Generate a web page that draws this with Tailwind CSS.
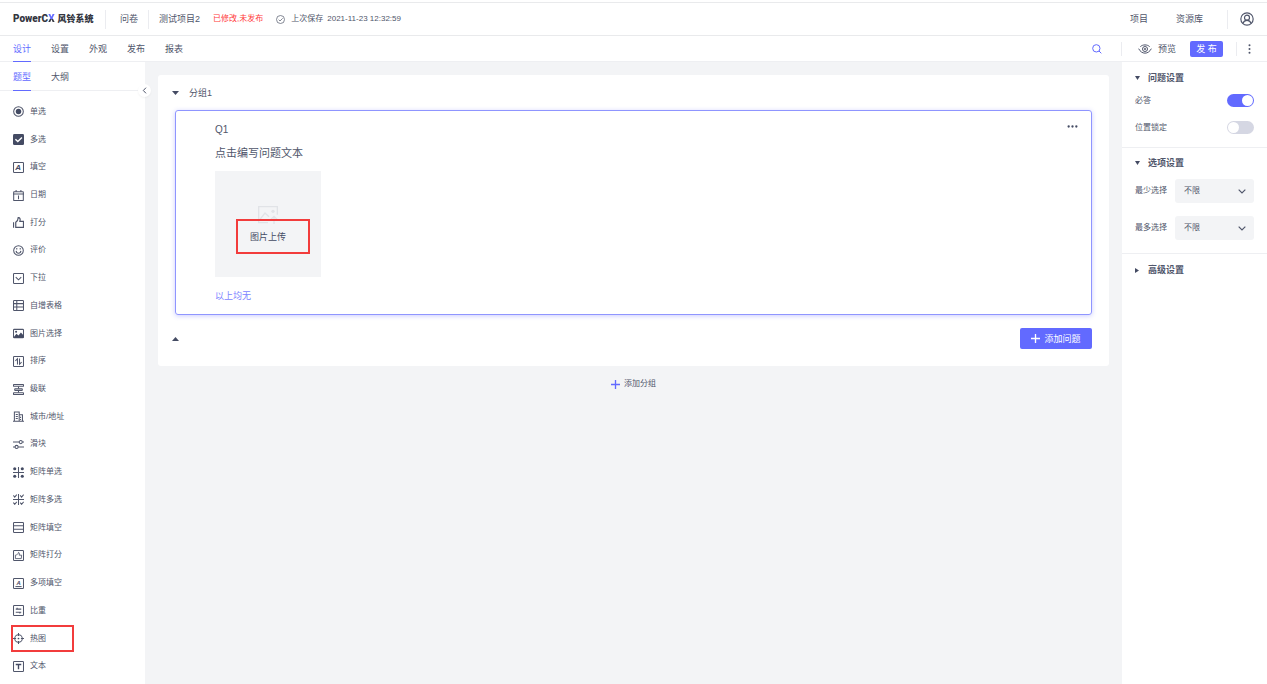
<!DOCTYPE html>
<html lang="zh-CN">
    <head>
      <title>PowerCX 风铃系统</title>
      <meta charset="UTF-8">
      <meta name="viewport" content="width=device-width, initial-scale=1.0">
      <script src="https://cdn.jsdelivr.net/npm/@tailwindcss/browser@4"></script>
    </head>
    <body class="flex h-screen min-h-[640px] flex-col overflow-hidden whitespace-nowrap bg-white pt-[2px] font-['Liberation_Sans','Noto_Sans_CJK_SC',sans-serif] text-[9px] leading-4 text-[#50566b]">

      <!-- Top bar -->
      <header class="flex h-[34px] shrink-0 items-center border-y border-[#e9eaec] px-[13px]">
        <a href="#" class="flex w-[80px] items-center gap-[3px] font-black text-[#34363f]">
          <span class="font-['Roboto'] text-[10px]">PowerC<span class="bg-linear-to-b from-[#626aff] from-50% to-[#34363f] to-60% bg-clip-text text-transparent">X</span></span>
          <span>风铃系统</span>
        </a>
        <span class="ml-3 h-[19px] w-px bg-[#ebecf0]"></span>
        <a href="#" class="ml-[14px]">问卷</a>
        <span class="ml-[10px] h-[19px] w-px bg-[#ebecf0]"></span>
        <span class="ml-[10px]">测试项目2</span>
        <span class="ml-[13px] text-[8px] text-[#ff3b3b]">已修改,未发布</span>
        <svg class="ml-[13px] size-[9px]" viewBox="0 0 27 27" fill="none" stroke="#6b7080" stroke-width="2.5"><circle cx="13.500" cy="13.500" r="12"/><path d="M8 14l4 4 8-8"/></svg>
        <span class="ml-[6px] text-[8px]">上次保存</span>
        <span class="ml-1 text-[8px]">2021-11-23 12:32:59</span>
        <nav class="ml-auto flex items-center">
          <a href="#">项目</a>
          <a href="#" class="ml-7">资源库</a>
          <span class="ml-6 h-[19px] w-px bg-[#ebecf0]"></span>
          <button class="ml-3" aria-label="账号">
            <svg class="size-[14px]" viewBox="0 0 42 42" fill="none" stroke="#50566b" stroke-width="3.500"><circle cx="21" cy="21" r="18.500"/><circle cx="21" cy="17" r="7.500"/><path d="M9 34c2-7 6-9 12-9s10 2 12 9"/></svg>
          </button>
        </nav>
      </header>

      <!-- Tabs and page actions -->
      <div class="flex h-[26px] shrink-0 items-center border-b border-[#eeeff2] pl-[13px]">
        <nav class="flex h-[26px] gap-5 leading-[27px]">
          <a href="#" class="border-b border-[#626aff] text-[#626aff]">设计</a>
          <a href="#">设置</a>
          <a href="#">外观</a>
          <a href="#">发布</a>
          <a href="#">报表</a>
        </nav>
        <button class="ml-auto" aria-label="搜索">
          <svg class="size-[10px]" viewBox="0 0 30 30" fill="none" stroke="#626aff" stroke-width="3"><circle cx="13" cy="13" r="11"/><path d="M21 21l7 7"/></svg>
        </button>
        <div class="ml-[19px] flex w-[146px] items-center">
          <span class="h-[14px] w-px bg-[#ebecf0]"></span>
          <a href="#" class="ml-4 flex items-center gap-[6px]">
            <svg class="h-[10px] w-[14px]" viewBox="0 0 42 30" fill="none" stroke="#50566b" stroke-width="3"><path d="M7 8C14 1 28 1 35 8M2 14c9 18 29 18 38 0"/><circle cx="21" cy="15" r="7.500"/><circle cx="21" cy="15" r="2"/></svg>
            <span>预览</span>
          </a>
          <button class="ml-[14px] h-4 w-[33px] rounded-[2px] bg-[#626aff] text-white">发 布</button>
          <span class="ml-[13px] h-[14px] w-px bg-[#ebecf0]"></span>
          <button class="ml-[11px]" aria-label="更多">
            <svg class="h-[10px] w-[3px]" viewBox="0 0 9 30" fill="#50566b"><circle cx="4.500" cy="4" r="3"/><circle cx="4.500" cy="15" r="3"/><circle cx="4.500" cy="26" r="3"/></svg>
          </button>
        </div>
      </div>

      <div class="flex min-h-0 flex-1">
        <!-- Question types -->
        <aside class="relative flex w-[145px] shrink-0 flex-col">
          <nav class="flex h-[29px] shrink-0 gap-5 border-b border-[#eeeff2] pl-[13px] leading-[30px]">
            <a href="#" class="h-[29px] border-b border-[#626aff] text-[#626aff]">题型</a>
            <a href="#">大纲</a>
          </nav>
          <button class="absolute top-[22px] -right-[6px] z-10 flex size-[13px] items-center justify-center rounded-full bg-white shadow-xs" aria-label="收起">
            <svg class="h-[7px] w-[5px]" viewBox="0 0 15 21" fill="none" stroke="#50566b" stroke-width="3"><path d="M12 2L4 10.500l8 8.500"/></svg>
          </button>
          <ul class="flex flex-1 flex-col pt-[7px] pb-1 pl-[13px] text-[8px] *:flex *:flex-1 *:items-center">
            <li><a href="#" class="flex items-center gap-[6px]">
              <svg class="size-[11px]" viewBox="0 0 32 32" fill="none" stroke="#50566b" stroke-width="3"><circle cx="16" cy="16" r="14"/><circle cx="16" cy="16" r="8" fill="#444b63" stroke="none"/></svg>单选</a></li>
            <li><a href="#" class="flex items-center gap-[6px]">
              <svg class="size-[11px]" viewBox="0 0 32 32" fill="none"><rect width="32" height="32" rx="4" fill="#444b63"/><path d="M7 15l7 7 12-12" stroke="#fff" stroke-width="4"/></svg>多选</a></li>
            <li><a href="#" class="flex items-center gap-[6px]">
              <svg class="size-[11px]" viewBox="0 0 32 32" fill="none"><rect x="1.500" y="1.500" width="29" height="29" rx="2" stroke="#50566b" stroke-width="3"/><text x="15" y="24" text-anchor="middle" font-size="23" font-weight="bold" font-style="italic" fill="#444b63">A</text></svg>填空</a></li>
            <li><a href="#" class="flex items-center gap-[6px]">
              <svg class="size-[11px]" viewBox="0 0 32 32" fill="none" stroke="#50566b" stroke-width="3"><rect x="2" y="5" width="28" height="25.500" rx="1"/><path d="M0 11.500h32M9 0v6M23 0v6M16 16v11"/></svg>日期</a></li>
            <li><a href="#" class="flex items-center gap-[6px]">
              <svg class="size-[11px]" viewBox="0 0 32 32" fill="none" stroke="#50566b" stroke-width="3.500"><path d="M1.500 15v16M8 30V15c5-3 7-7 7-13 5-1 7 3 5 11h10.500v17H8z"/></svg>打分</a></li>
            <li><a href="#" class="flex items-center gap-[6px]">
              <svg class="size-[11px]" viewBox="0 0 32 32" fill="none" stroke="#50566b" stroke-width="3"><circle cx="16" cy="16" r="14"/><path d="M9 17c1 9 13 9 14 0M11 9v4M21 9v4"/></svg>评价</a></li>
            <li><a href="#" class="flex items-center gap-[6px]">
              <svg class="size-[11px]" viewBox="0 0 32 32" fill="none" stroke="#50566b" stroke-width="3"><rect x="1.500" y="1.500" width="29" height="29" rx="2"/><path d="M8 12l8 8 8-8"/></svg>下拉</a></li>
            <li><a href="#" class="flex items-center gap-[6px]">
              <svg class="size-[11px]" viewBox="0 0 32 32" fill="none" stroke="#50566b" stroke-width="3"><rect x="1.500" y="1.500" width="29" height="29" rx="2"/><path d="M2 10.500h28M2 20.500h28M11 2v28"/></svg>自增表格</a></li>
            <li><a href="#" class="flex items-center gap-[6px]">
              <svg class="size-[11px]" viewBox="0 0 32 32" fill="none"><rect x="1.500" y="4" width="29" height="24" rx="2" stroke="#50566b" stroke-width="3"/><path d="M2 27l8-10 6 5 7-9 8 9v6H2z" fill="#444b63"/><circle cx="9" cy="11" r="3" fill="#444b63"/></svg>图片选择</a></li>
            <li><a href="#" class="flex items-center gap-[6px]">
              <svg class="size-[11px]" viewBox="0 0 32 32" fill="none" stroke="#50566b" stroke-width="3"><rect x="1.500" y="1.500" width="29" height="29" rx="2"/><path d="M7 14l6-6v17M19 7v17l6-6"/></svg>排序</a></li>
            <li><a href="#" class="flex items-center gap-[6px]">
              <svg class="size-[11px]" viewBox="0 0 32 32" fill="none" stroke="#50566b" stroke-width="3"><rect x="1.500" y="1.500" width="29" height="5" rx="1"/><rect x="5" y="13.500" width="22" height="5" rx="1"/><rect x="1.500" y="25.500" width="29" height="5" rx="1"/><path d="M16 7v6M16 19v6"/></svg>级联</a></li>
            <li><a href="#" class="flex items-center gap-[6px]">
              <svg class="size-[11px]" viewBox="0 0 32 32" fill="none" stroke="#50566b" stroke-width="3"><path d="M0 29.500h32M4 29V3h14v26M18 11h9.500v18M8 10h6M8 16h6M8 22h6M22 17v3M22 23v3"/></svg>城市/地址</a></li>
            <li><a href="#" class="flex items-center gap-[6px]">
              <svg class="size-[11px]" viewBox="0 0 32 32" fill="none" stroke="#50566b" stroke-width="3"><path d="M0 9h18M27 9h5M0 23h6M15 23h17"/><circle cx="22.500" cy="9" r="4.500"/><circle cx="10.500" cy="23" r="4.500"/></svg>滑块</a></li>
            <li><a href="#" class="flex items-center gap-[6px]">
              <svg class="size-[11px]" viewBox="0 0 32 32" fill="#444b63"><path d="M16 0v32M0 16h32" stroke="#50566b" stroke-width="3"/><circle cx="5" cy="5" r="4.500"/><circle cx="27" cy="5" r="4.500"/><circle cx="5" cy="27" r="4.500"/><circle cx="27" cy="27" r="4.500"/></svg>矩阵单选</a></li>
            <li><a href="#" class="flex items-center gap-[6px]">
              <svg class="size-[11px]" viewBox="0 0 32 32" fill="none" stroke="#50566b" stroke-width="3"><path d="M16 0v32M0 16h32M1 4l4 5 6-7M21 4l4 5 6-7M1 25l4 5 6-7M21 25l4 5 6-7"/></svg>矩阵多选</a></li>
            <li><a href="#" class="flex items-center gap-[6px]">
              <svg class="size-[11px]" viewBox="0 0 32 32" fill="none" stroke="#50566b" stroke-width="3"><rect x="1.500" y="1.500" width="29" height="29" rx="2"/><path d="M2 11h28M2 21h28"/></svg>矩阵填空</a></li>
            <li><a href="#" class="flex items-center gap-[6px]">
              <svg class="size-[11px]" viewBox="0 0 32 32" fill="none" stroke="#50566b" stroke-width="3"><rect x="1.500" y="1.500" width="29" height="29" rx="2"/><path d="M7 15v10h17l1-10h-7c1-5 1-7-2-8-1 5-4 7-9 8z" stroke-width="2.500"/></svg>矩阵打分</a></li>
            <li><a href="#" class="flex items-center gap-[6px]">
              <svg class="size-[11px]" viewBox="0 0 32 32" fill="none"><rect x="1.500" y="1.500" width="29" height="29" rx="2" stroke="#50566b" stroke-width="3"/><path d="M7 25h18" stroke="#50566b" stroke-width="3"/><text x="16" y="20" text-anchor="middle" font-size="17" font-weight="bold" font-style="italic" fill="#444b63">A</text></svg>多项填空</a></li>
            <li><a href="#" class="flex items-center gap-[6px]">
              <svg class="size-[11px]" viewBox="0 0 32 32" fill="none" stroke="#50566b" stroke-width="3"><rect x="1.500" y="1.500" width="29" height="29" rx="2"/><path d="M8 12h16M8 21h16M12 8v4M20 21v4"/></svg>比重</a></li>
            <li class="relative"><a href="#" class="flex items-center gap-[6px]">
              <svg class="size-[11px]" viewBox="0 0 32 32" fill="none" stroke="#50566b" stroke-width="3"><circle cx="16" cy="16" r="11"/><path d="M16 0v9M16 23v9M0 16h9M23 16h9"/><circle cx="16" cy="16" r="2.500" fill="#444b63" stroke="none"/></svg>热图</a>
              <span class="absolute inset-y-0 -left-[2px] w-[63px] border-2 border-[#f23c3c]"></span></li>
            <li><a href="#" class="flex items-center gap-[6px]">
              <svg class="size-[11px]" viewBox="0 0 32 32" fill="none"><rect x="1.500" y="1.500" width="29" height="29" rx="2" stroke="#50566b" stroke-width="3"/><path d="M8 10h16M16 10v14" stroke="#444b63" stroke-width="4"/></svg>文本</a></li>
          </ul>
        </aside>

        <!-- Survey canvas -->
        <main class="min-w-0 flex-1 bg-[#f3f4f6] p-[13px]">
          <section class="rounded-[3px] bg-white px-[17px]">
            <div class="flex h-[35px] items-center">
              <button aria-label="折叠分组" class="w-[14px]"><svg class="-ml-[3px] h-[4px] w-[7px]" viewBox="0 0 7 4" fill="#444b63"><path d="M0 0h7L3.500 4z"/></svg></button>
              <span>分组1</span>
            </div>
            <div class="relative rounded-[3px] border border-[#8f95ff] px-[39px] pt-[11px] pb-[10px] shadow-[0_1px_5px_#626aff55]">
              <button aria-label="更多操作" class="absolute top-[14px] right-[13px]"><svg class="h-[3px] w-[11px]" viewBox="0 0 33 9" fill="#444b63"><circle cx="5" cy="4.500" r="3.500"/><circle cx="16.500" cy="4.500" r="3.500"/><circle cx="28" cy="4.500" r="3.500"/></svg></button>
              <div class="text-[10px]">Q1</div>
              <h2 class="mt-[5px] text-[11px] leading-5">点击编写问题文本</h2>
              <button class="relative mt-2 flex size-[106px] flex-col items-center bg-[#f3f4f6] pt-[35px] text-[#444b63]">
                <svg class="h-[18px] w-5" viewBox="0 0 60 54" fill="none" stroke="#e1e3e7" stroke-width="4"><path d="M58 26V2H2v48h28M6 40l15-19 12 11M48 54V32M39 40l9-9 9 9"/><circle cx="45" cy="16" r="5" fill="#e1e3e7" stroke="none"/></svg>
                <span class="mt-[5px]">图片上传</span>
                <span class="absolute top-[48px] left-[21px] h-[35px] w-[74px] border-2 border-[#f23c3c]"></span>
              </button>
              <a href="#" class="mt-[11px] block w-fit text-[#7c83ff]">以上均无</a>
            </div>
            <div class="flex items-center justify-between pt-[13px] pb-[17px]">
              <button aria-label="收起"><svg class="-ml-[3px] h-[4px] w-[7px]" viewBox="0 0 7 4" fill="#444b63"><path d="M0 4h7L3.500 0z"/></svg></button>
              <button class="flex h-[21px] w-[72px] items-center justify-center gap-1 rounded-[2px] bg-[#626aff] text-white">
                <svg class="size-[9px]" viewBox="0 0 27 27" stroke="currentColor" stroke-width="4"><path d="M13.500 0v27M0 13.500h27"/></svg>添加问题</button>
            </div>
          </section>
          <button class="mx-auto mt-[10px] flex items-center gap-1 text-[8px]">
            <svg class="size-[9px]" viewBox="0 0 27 27" stroke="#626aff" stroke-width="4"><path d="M13.500 0v27M0 13.500h27"/></svg>添加分组</button>
        </main>

        <!-- Settings -->
        <aside class="w-[145px] shrink-0 text-[8px]">
          <section class="border-b border-[#eeeff2] pt-2 pr-[13px] pb-[13px] pl-[13px]">
            <h3 class="flex items-center text-[9px] font-bold"><svg class="mr-2 h-[4px] w-[5px]" viewBox="0 0 5 4" fill="#444b63"><path d="M0 0h5L2.500 4z"/></svg>问题设置</h3>
            <div class="mt-2 flex h-[13px] items-center justify-between">
              <label for="required">必答</label>
              <input id="required" type="checkbox" checked class="h-[13px] w-[27px] appearance-none rounded-full bg-[#d5d7e3] p-px before:block before:size-[11px] before:rounded-full before:bg-white checked:bg-[#626aff] checked:before:ml-auto">
            </div>
            <div class="mt-[14px] flex h-[13px] items-center justify-between">
              <label for="locked">位置锁定</label>
              <input id="locked" type="checkbox" class="h-[13px] w-[27px] appearance-none rounded-full bg-[#d5d7e3] p-px before:block before:size-[11px] before:rounded-full before:bg-white checked:bg-[#626aff] checked:before:ml-auto">
            </div>
          </section>
          <section class="border-b border-[#eeeff2] pt-[7px] pr-[13px] pb-[13px] pl-[13px]">
            <h3 class="flex items-center text-[9px] font-bold"><svg class="mr-2 h-[4px] w-[5px]" viewBox="0 0 5 4" fill="#444b63"><path d="M0 0h5L2.500 4z"/></svg>选项设置</h3>
            <div class="mt-2 flex items-center justify-between">
              <label for="min">最少选择</label>
              <div class="relative flex items-center">
                <select id="min" class="h-6 w-[79px] appearance-none rounded-[3px] bg-[#f3f4f6] pl-[9px]"><option>不限</option></select>
                <svg class="pointer-events-none absolute right-2 h-[5px] w-[8px]" viewBox="0 0 24 15" fill="none" stroke="#50566b" stroke-width="3.500"><path d="M2 2l10 10L22 2"/></svg>
              </div>
            </div>
            <div class="mt-[13px] flex items-center justify-between">
              <label for="max">最多选择</label>
              <div class="relative flex items-center">
                <select id="max" class="h-6 w-[79px] appearance-none rounded-[3px] bg-[#f3f4f6] pl-[9px]"><option>不限</option></select>
                <svg class="pointer-events-none absolute right-2 h-[5px] w-[8px]" viewBox="0 0 24 15" fill="none" stroke="#50566b" stroke-width="3.500"><path d="M2 2l10 10L22 2"/></svg>
              </div>
            </div>
          </section>
          <section class="pt-2 pl-[13px]">
            <h3 class="flex items-center text-[9px] font-bold"><svg class="mr-2 h-[5px] w-[5px]" viewBox="0 0 5 5" fill="#444b63"><path d="M0 0v5L4 2.500z"/></svg>高级设置</h3>
          </section>
        </aside>
      </div>
    </body>
</html>
